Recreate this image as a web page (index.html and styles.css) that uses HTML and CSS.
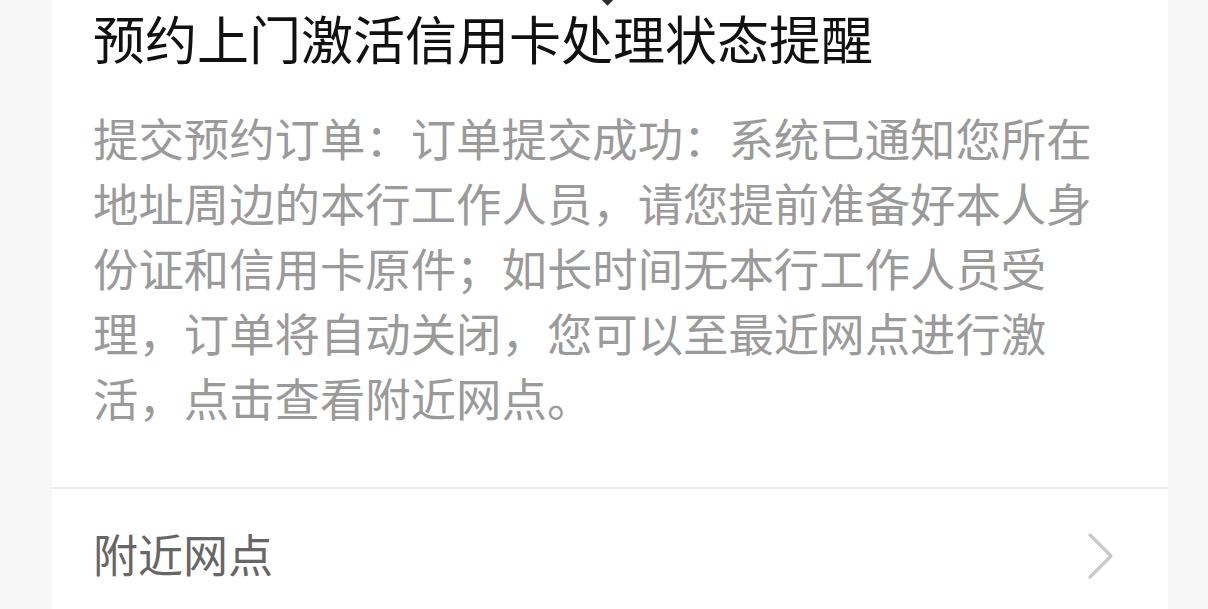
FILE: index.html
```html
<!DOCTYPE html>
<html lang="zh-CN">
<head>
<meta charset="utf-8">
<title>预约上门激活信用卡处理状态提醒</title>
<link rel="stylesheet" href="styles.css">
</head>
<body>
<div class="page">
  <div class="card">
    <span class="pointer"></span>
    <div class="main">
      <h1 class="title">预约上门激活信用卡处理状态提醒</h1>
      <p class="desc">提交预约订单：订单提交成功：系统已通知您所在地址周边的本行工作人员，请您提前准备好本人身份证和信用卡原件；如长时间无本行工作人员受理，订单将自动关闭，您可以至最近网点进行激活，点击查看附近网点。</p>
    </div>
    <div class="row">
      <span class="row-label">附近网点</span>
      <svg class="chevron" width="28" height="48" viewBox="0 0 28 48">
        <path d="M3 3 L24 24 L3 45" fill="none" stroke="#c9c9c9" stroke-width="3.2" stroke-linecap="round" stroke-linejoin="round"/>
      </svg>
    </div>
  </div>
</div>
</body>
</html>
```

FILE: styles.css
```css
html, body {
  margin: 0;
  padding: 0;
  background: #f7f7f7;
  overflow: hidden;
}
body {
  font-family: "Noto Sans CJK SC", "Noto Sans", sans-serif;
}
.page {
  padding: 0 40px 0 52px;
}
.card {
  position: relative;
  background: #ffffff;
  height: 640px;
}
.pointer {
  position: absolute;
  top: -8px;
  left: 549px;
  width: 13px;
  height: 13px;
  background: #2e2e2e;
  transform: rotate(45deg);
}
.main {
  padding: 0 60px 57px 41px;
  border-bottom: 2px solid #efefef;
}
.title {
  margin: -2px 0 0 0;
  font-size: 52px;
  line-height: 80px;
  font-weight: 400;
  color: #111111;
  white-space: nowrap;
}
.desc {
  margin: 27px 0 0 0;
  font-size: 45.4px;
  line-height: 65px;
  color: #9a9a9a;
}
.row {
  display: flex;
  align-items: center;
  justify-content: space-between;
  height: 128px;
  padding: 0 53px 0 41px;
}
.row-label {
  font-size: 45px;
  line-height: 65px;
  color: #666666;
}
.chevron {
  display: block;
  margin-top: 5px;
}
```
